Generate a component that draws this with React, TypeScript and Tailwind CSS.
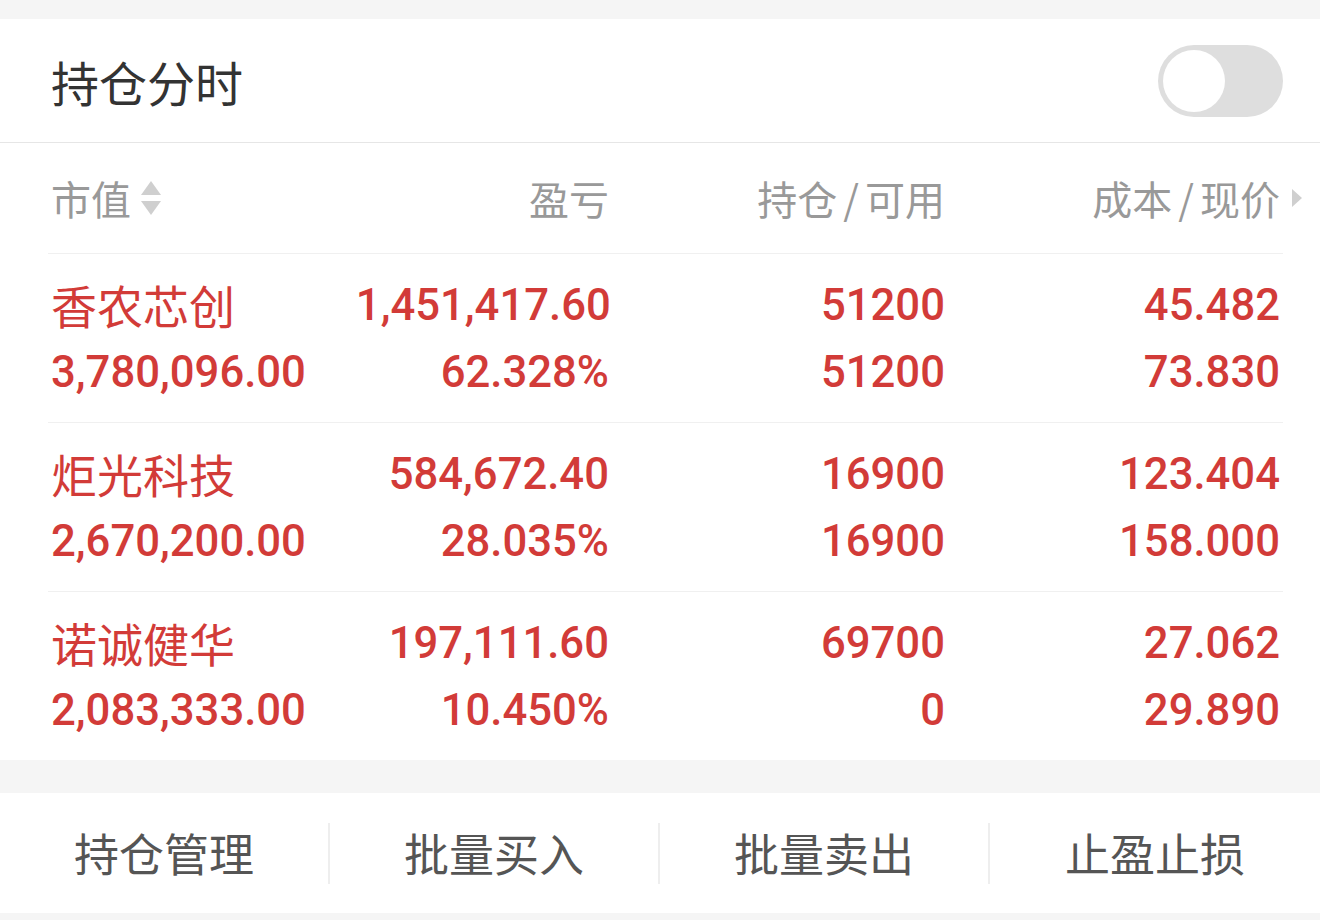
import { useState } from 'react';

const cjk = "font-['Noto_Sans_CJK_SC',sans-serif]";
const num = "h-[67px] leading-[67px] font-['Roboto',sans-serif] font-medium text-[45px] scale-x-[0.97]";

const holdings = [
  { name: '香农芯创', value: '3,780,096.00', pnl: '1,451,417.60', pct: '62.328%', hold: '51200', avail: '51200', cost: '45.482', price: '73.830' },
  { name: '炬光科技', value: '2,670,200.00', pnl: '584,672.40', pct: '28.035%', hold: '16900', avail: '16900', cost: '123.404', price: '158.000' },
  { name: '诺诚健华', value: '2,083,333.00', pnl: '197,111.60', pct: '10.450%', hold: '69700', avail: '0', cost: '27.062', price: '29.890' },
];

const actions = ['持仓管理', '批量买入', '批量卖出', '止盈止损'];

function Num({ children, left }: { children: string; left?: boolean }) {
  return <div className={`${num} ${left ? 'origin-left text-left' : 'origin-right text-right'}`}>{children}</div>;
}

export default function App() {
  const [on, setOn] = useState(false);

  return (
    <div className={`w-[1320px] h-[920px] bg-[#f5f5f5] pt-[19px] ${cjk}`}>
      <div className="bg-white">
        <div className="h-[124px] flex items-center justify-between pl-[51px] pr-[37px] border-b border-[#e6e6e6]">
          <h1 className="text-[48px] text-[#333]">持仓分时</h1>
          <button
            onClick={() => setOn((prev) => !prev)}
            className="w-[125px] h-[72px] rounded-full bg-[#dedede] p-[5px] flex items-center"
          >
            <span className="w-[62px] h-[62px] rounded-full bg-white" />
          </button>
        </div>

        <div className="pl-[48px] pr-[37px]">
          <div className="h-[111px] grid grid-cols-[300px_261px_336px_1fr] items-center text-[40px] text-[#999] border-b border-[#f0f0f0]">
            <div className="flex items-center pl-[3px]">
              <span>市值</span>
              <svg width="24" height="40" viewBox="0 0 24 40" className="ml-[8px]">
                <path d="M12 3 L22 17 L2 17 Z" fill="#cfcfcf" />
                <path d="M12 37 L22 23 L2 23 Z" fill="#cfcfcf" />
              </svg>
            </div>
            <div className="text-right">盈亏</div>
            <div className="text-right">
              持仓<span className="mx-[6px]">/</span>可用
            </div>
            <div className="text-right relative pr-[3px]">
              成本<span className="mx-[6px]">/</span>现价
              <svg width="12" height="20" viewBox="0 0 12 20" className="absolute -right-[20px] top-1/2 -translate-y-1/2">
                <path d="M1 1 L11 10 L1 19 Z" fill="#cfcfcf" />
              </svg>
            </div>
          </div>

          {holdings.map((h, i) => (
            <div
              key={h.name}
              className={`grid grid-cols-[300px_261px_336px_1fr] py-[17px] text-[#d23b38] ${
                i < holdings.length - 1 ? 'border-b border-[#f0f0f0]' : ''
              }`}
            >
              <div className="pl-[3px]">
                <div className="h-[67px] leading-[67px] text-[46px]">{h.name}</div>
                <Num left>{h.value}</Num>
              </div>
              <div>
                <Num>{h.pnl}</Num>
                <Num>{h.pct}</Num>
              </div>
              <div>
                <Num>{h.hold}</Num>
                <Num>{h.avail}</Num>
              </div>
              <div className="pr-[3px]">
                <Num>{h.cost}</Num>
                <Num>{h.price}</Num>
              </div>
            </div>
          ))}
        </div>
      </div>

      <div className="mt-[33px] bg-white h-[120px] flex items-center">
        {actions.map((a, i) => (
          <div key={a} className="flex-1 flex items-center h-full">
            <div className="flex-1 text-center text-[45px] text-[#555]">{a}</div>
            {i < actions.length - 1 && <div className="w-[2px] h-[61px] bg-[#eeeeee]" />}
          </div>
        ))}
      </div>
    </div>
  );
}
